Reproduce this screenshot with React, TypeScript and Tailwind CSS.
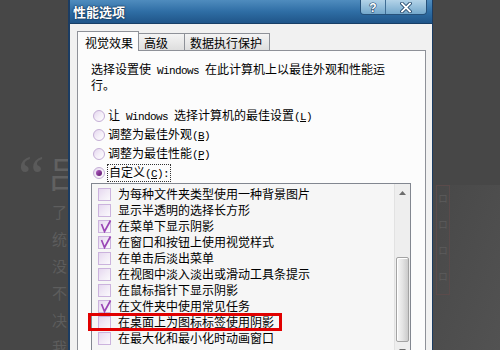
import React from "react";

function M({ children }: { children: React.ReactNode }) {
  return (
    <span className="[font-family:'Liberation_Mono',monospace] text-[11px] tracking-[-0.6px]">
      {children}
    </span>
  );
}

function Radio({ checked }: { checked?: boolean }) {
  return (
    <span className="ml-[2px] w-[12px] h-[12px] shrink-0 rounded-full border border-[#c4aed6] bg-gradient-to-br from-[#e4d6ee] via-[#f4eef8] to-[#ffffff] flex items-center justify-center">
      {checked && (
        <span className="w-[6px] h-[6px] rounded-full bg-gradient-to-br from-[#b763c9] to-[#5a1468]" />
      )}
    </span>
  );
}

function Check({ checked }: { checked?: boolean }) {
  return (
    <span className="relative w-[13px] h-[13px] shrink-0 border border-[#cbb3dd] bg-gradient-to-br from-[#e6d8f0] via-[#f1eaf6] to-[#fbf9fd]">
      {checked && (
        <svg
          className="absolute left-[1px] top-[-1px]"
          width="12"
          height="13"
          viewBox="0 0 12 13"
        >
          <path d="M1.5 4 L4.5 11.5 L10.5 0.5" stroke="#9a46b6" strokeWidth="1.7" fill="none" />
        </svg>
      )}
    </span>
  );
}

const items: { t: string; c?: boolean; hl?: boolean }[] = [
  { t: "为每种文件夹类型使用一种背景图片" },
  { t: "显示半透明的选择长方形" },
  { t: "在菜单下显示阴影", c: true },
  { t: "在窗口和按钮上使用视觉样式", c: true },
  { t: "在单击后淡出菜单" },
  { t: "在视图中淡入淡出或滑动工具条提示" },
  { t: "在鼠标指针下显示阴影" },
  { t: "在文件夹中使用常见任务", c: true },
  { t: "在桌面上为图标标签使用阴影", hl: true },
  { t: "在最大化和最小化时动画窗口" },
];

export default function App() {
  return (
    <div className="w-[500px] h-[350px] overflow-hidden flex bg-[#474747] text-black text-[12px] [font-family:'Noto_Sans_CJK_SC','Noto_Sans',sans-serif]">
      {/* background page, left */}
      <div className="w-[68px] shrink-0 overflow-hidden pt-[146px] text-[#5d5d5d]">
        <div className="flex items-start h-[48px] whitespace-nowrap">
          <span className="ml-[18px] text-[60px] leading-[60px] [font-family:'Liberation_Serif',serif] text-[#5a5a5a]">
            “
          </span>
          <span className="ml-[3px] mt-[6px] text-[36px] leading-[40px] text-[#616161]">吕</span>
        </div>
        <div className="pl-[52px] flex flex-col text-[15px] leading-[27px] mt-[4px] whitespace-nowrap">
          <span>了</span>
          <span>统</span>
          <span>没</span>
          <span>不</span>
          <span>决</span>
          <span>我</span>
        </div>
      </div>

      {/* dialog window */}
      <div className="w-[365px] shrink-0 flex flex-col border-l-2 border-r border-[#1b3c62] bg-[#f1f1f1]">
        {/* title bar */}
        <div className="h-[24px] shrink-0 flex items-start justify-between bg-gradient-to-b from-[#4f8cbe] via-[#2f6ea5] to-[#1f5589] border-b border-[#173e66]">
          <span className="pl-[3px] pt-[5px] text-white font-bold text-[13px] leading-[14px] [text-shadow:0_0_2px_#0c2744,0_0_1px_#0c2744]">
            性能选项
          </span>
          <div className="mr-[5px] flex h-[15px] rounded-b-[4px] border border-t-0 border-[#26517a] overflow-hidden">
            <div className="w-[25px] h-full flex items-center justify-center bg-gradient-to-b from-[#b3d3e8] to-[#74a8cc] border-r border-[#3f6d94]">
              <svg width="10" height="12" viewBox="0 0 10 12">
                <text
                  x="5"
                  y="10.5"
                  textAnchor="middle"
                  fontSize="12"
                  fontWeight="bold"
                  fontFamily="Liberation Sans, sans-serif"
                  fill="#ffffff"
                  stroke="#23476b"
                  strokeWidth="1.2"
                  paintOrder="stroke"
                >
                  ?
                </text>
              </svg>
            </div>
            <div className="w-[40px] h-full flex items-center justify-center bg-gradient-to-b from-[#b3d3e8] to-[#74a8cc]">
              <svg width="12" height="11" viewBox="0 0 12 11">
                <path d="M2 1.5 L10 9.5 M10 1.5 L2 9.5" stroke="#23476b" strokeWidth="3.6" strokeLinecap="square" />
                <path d="M2 1.5 L10 9.5 M10 1.5 L2 9.5" stroke="#ffffff" strokeWidth="1.8" strokeLinecap="square" />
              </svg>
            </div>
          </div>
        </div>

        {/* body */}
        <div className="flex-1 flex flex-col pl-[7px] pr-[6px] pt-[7px]">
          {/* tabs */}
          <div className="h-[19px] flex items-start leading-[17px]">
            <div className="relative z-10 w-[62px] h-[20px] pl-[7px] pt-[2px] bg-[#fcfcfc] border border-b-0 border-[#8e9198]">
              视觉效果
            </div>
            <div className="mt-[2px] w-[46px] h-[17px] pl-[5px] border border-b-0 border-l-0 border-[#8e9198] bg-gradient-to-b from-[#f4f4f4] to-[#dedede]">
              高级
            </div>
            <div className="mt-[2px] w-[85px] h-[17px] pl-[5px] border border-b-0 border-l-0 border-[#8e9198] bg-gradient-to-b from-[#f4f4f4] to-[#dedede]">
              数据执行保护
            </div>
          </div>

          {/* panel */}
          <div className="flex-1 border border-[#8e9198] bg-[#fcfcfc] pl-[13px] pt-[11px]">
            <div className="flex flex-col leading-[14px] whitespace-nowrap">
              <span>
                选择设置使<M> Windows </M>在此计算机上以最佳外观和性能运
              </span>
              <span>行。</span>
            </div>

            <div className="mt-[14px] flex flex-col">
              <div className="h-[19px] flex items-center">
                <Radio />
                <span className="ml-[3px] leading-[14px]">
                  让<M> Windows </M>选择计算机的最佳设置
                  <M>
                    (<span className="underline">L</span>)
                  </M>
                </span>
              </div>
              <div className="h-[19px] flex items-center">
                <Radio />
                <span className="ml-[3px] leading-[14px]">
                  调整为最佳外观
                  <M>
                    (<span className="underline">B</span>)
                  </M>
                </span>
              </div>
              <div className="h-[19px] flex items-center">
                <Radio />
                <span className="ml-[3px] leading-[14px]">
                  调整为最佳性能
                  <M>
                    (<span className="underline">P</span>)
                  </M>
                </span>
              </div>
              <div className="h-[19px] flex items-center">
                <Radio checked />
                <span className="ml-[2px] px-[1px] leading-[13px] border border-dotted border-[#333]">
                  自定义
                  <M>
                    (<span className="underline">C</span>):
                  </M>
                </span>
              </div>
            </div>

            {/* list box */}
            <div className="mt-[1px] w-[320px] h-[178px] flex border border-[#828790] bg-[#f6f6f6]">
              <div className="flex-1 flex flex-col pt-[2px] pl-[6px]">
                {items.map((it, i) => (
                  <div key={i} className="relative h-[16px] shrink-0 flex items-center whitespace-nowrap">
                    <Check checked={it.c} />
                    <span className="ml-[7px] leading-[14px]">{it.t}</span>
                    {it.hl && (
                      <div className="absolute left-[-10px] top-[-1px] w-[194px] h-[18px] border-[3px] border-[#e10000]" />
                    )}
                  </div>
                ))}
              </div>
              {/* scrollbar */}
              <div className="w-[16px] shrink-0 flex flex-col bg-[#eeeeee] border-l border-[#e2e2e2]">
                <div className="h-[17px] flex items-center justify-center">
                  <svg width="7" height="4" viewBox="0 0 7 4">
                    <path d="M0 4 L3.5 0 L7 4 Z" fill="#6d6d6d" />
                  </svg>
                </div>
                <div className="h-[56px]" />
                <div className="mx-[1px] h-[85px] rounded-[2px] border border-[#a3a3a3] bg-gradient-to-r from-[#f7f7f7] via-[#e4e4e4] to-[#cbcbcb] shadow-[inset_1px_1px_0_#ffffff]" />
                <div className="h-[17px] flex items-center justify-center">
                  <svg width="7" height="4" viewBox="0 0 7 4">
                    <path d="M0 0 L3.5 4 L7 0 Z" fill="#6d6d6d" />
                  </svg>
                </div>
              </div>
            </div>
          </div>
        </div>
      </div>

      {/* background page, right */}
      <div className="flex-1 flex flex-col">
        <div className="h-[185px] shrink-0" />
        <div className="flex-1 flex bg-gradient-to-br from-[#484848] via-[#4d4d4d] to-[#525252]">
          <div className="ml-[3px] w-[14px] h-[110px] border border-[#5a4b4b] flex flex-col items-center pt-[8px] gap-[16px] text-[9px] text-[#5c5c5c] leading-[10px]">
            <span>口</span>
            <span>口</span>
            <span>口</span>
            <span>口</span>
          </div>
        </div>
      </div>
    </div>
  );
}
